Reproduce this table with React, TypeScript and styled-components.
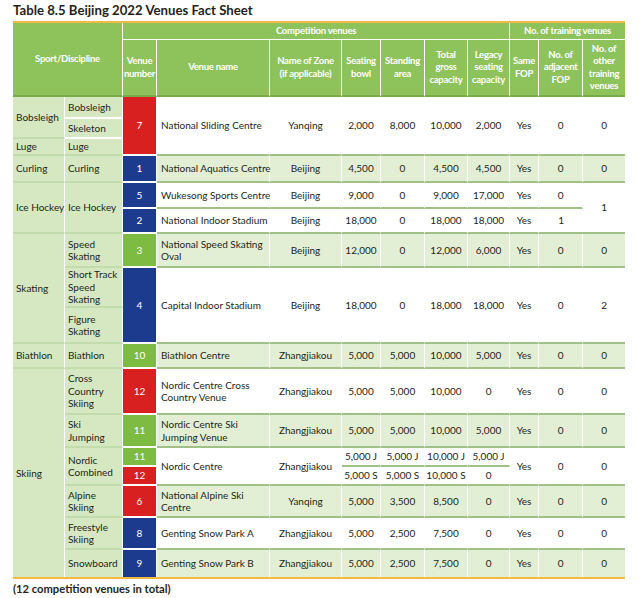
import React from "react";
import styled, { createGlobalStyle } from "styled-components";

const Global = createGlobalStyle`
  html, body { margin: 0; padding: 0; background: #ffffff; }
  body { font-family: Lato, "Open Sans", sans-serif; color: #231f20; }
`;

const Page = styled.div`
  width: 640px;
  height: 598px;
  padding: 1px 15px 0 13px;
  box-sizing: border-box;
`;

const Title = styled.h1`
  margin: 0;
  font-size: 13.2px;
  line-height: 18px;
  font-weight: 700;
  height: 20px;
`;

const Table = styled.table`
  width: 612px;
  table-layout: fixed;
  border-collapse: separate;
  border-spacing: 0;
  border-top: 2px solid #f4b942;
  border-bottom: 2px solid #f4b942;
  font-size: 10px;
  line-height: 12.5px;
`;

const Tr = styled.tr<{ $h: number }>`
  height: ${(p) => p.$h}px;
`;

const Th = styled.th<{ $last?: boolean; $bottom?: string }>`
  background: #8dc35a;
  color: #ffffff;
  font-weight: 700;
  font-size: 9.5px;
  line-height: 12.5px;
  letter-spacing: -0.25px;
  text-align: center;
  vertical-align: middle;
  padding: 0;
  border-right: ${(p) => (p.$last ? "none" : "1px solid #ffffff")};
  border-bottom: ${(p) => p.$bottom ?? "2px solid #79ab4a"};
  white-space: nowrap;
`;

const lines: Record<string, string> = {
  green: "2px solid #9fc087",
  light: "2px solid #c3dcab",
  white: "2px solid #ffffff",
  none: "none",
};

const Td = styled.td<{
  $bg?: string;
  $align?: string;
  $b?: string;
  $last?: boolean;
}>`
  background: ${(p) => p.$bg ?? "transparent"};
  color: #231f20;
  text-align: ${(p) => p.$align ?? "center"};
  vertical-align: middle;
  padding: 0 1px;
  padding-left: ${(p) => (p.$align === "left" ? "4px" : "1px")};
  border-right: ${(p) => (p.$last ? "none" : "1px solid #ffffff")};
  border-bottom: ${(p) => lines[p.$b ?? "green"]};
  white-space: nowrap;
`;

const Sport = styled(Td).attrs({ $align: "left" })`
  background: #d6e8c1;
  padding-left: 3px;
  overflow: visible;
`;

const Num = styled(Td)`
  color: #ffffff;
  border-bottom: 2px solid #ffffff;
`;

const Footer = styled.div`
  font-weight: 700;
  font-size: 11.2px;
  line-height: 14px;
  padding-top: 3px;
`;

const RED = "#d7201f";
const BLUE = "#1d3b8e";
const GRN = "#7dbb42";
const LIGHT = "#e3efd5";

type C = {
  v: string;
  rs?: number;
  b?: string;
};

const Nums: React.FC<{ cells: C[]; bg?: string }> = ({ cells, bg }) => (
  <>
    {cells.map((c, i) => (
      <Td
        key={i}
        rowSpan={c.rs}
        $bg={bg}
        $b={c.b}
        $last={i === cells.length - 1}
      >
        {c.v}
      </Td>
    ))}
  </>
);

const plain = (vals: string[], rs?: number): C[] => vals.map((v) => ({ v, rs }));

export default function App() {
  return (
    <Page>
      <Global />
      <Title>Table 8.5 Beijing 2022 Venues Fact Sheet</Title>
      <Table>
        <colgroup>
          <col style={{ width: 52 }} />
          <col style={{ width: 58 }} />
          <col style={{ width: 34 }} />
          <col style={{ width: 113 }} />
          <col style={{ width: 72 }} />
          <col style={{ width: 39 }} />
          <col style={{ width: 44 }} />
          <col style={{ width: 43 }} />
          <col style={{ width: 42 }} />
          <col style={{ width: 29 }} />
          <col style={{ width: 44 }} />
          <col style={{ width: 42 }} />
        </colgroup>
        <thead>
          <Tr $h={17}>
            <Th colSpan={2} rowSpan={2}>Sport/Discipline</Th>
            <Th colSpan={7} $bottom="1px solid #ffffff">Competition venues</Th>
            <Th colSpan={3} $last $bottom="1px solid #ffffff">No. of training venues</Th>
          </Tr>
          <Tr $h={57}>
            <Th>Venue<br />number</Th>
            <Th>Venue name</Th>
            <Th>Name of Zone<br />(if applicable)</Th>
            <Th>Seating<br />bowl</Th>
            <Th>Standing<br />area</Th>
            <Th>Total<br />gross<br />capacity</Th>
            <Th>Legacy<br />seating<br />capacity</Th>
            <Th>Same<br />FOP</Th>
            <Th>No. of<br />adjacent<br />FOP</Th>
            <Th $last>No. of<br />other<br />training<br />venues</Th>
          </Tr>
        </thead>
        <tbody>
          <Tr $h={22}>
            <Sport rowSpan={2} $b="light">Bobsleigh</Sport>
            <Sport $b="white">Bobsleigh</Sport>
            <Num rowSpan={3} $bg={RED}>7</Num>
            <Td rowSpan={3} $align="left">National Sliding Centre</Td>
            <Nums cells={plain(["Yanqing", "2,000", "8,000", "10,000", "2,000", "Yes", "0", "0"], 3)} />
          </Tr>
          <Tr $h={20}>
            <Sport $b="white">Skeleton</Sport>
          </Tr>
          <Tr $h={17}>
            <Sport $b="light">Luge</Sport>
            <Sport $b="light">Luge</Sport>
          </Tr>
          <Tr $h={27}>
            <Sport $b="light">Curling</Sport>
            <Sport $b="light">Curling</Sport>
            <Num $bg={BLUE}>1</Num>
            <Td $align="left" $bg={LIGHT}>National Aquatics Centre</Td>
            <Nums bg={LIGHT} cells={plain(["Beijing", "4,500", "0", "4,500", "4,500", "Yes", "0", "0"])} />
          </Tr>
          <Tr $h={26}>
            <Sport rowSpan={2} $b="light">Ice Hockey</Sport>
            <Sport rowSpan={2} $b="light">Ice Hockey</Sport>
            <Num $bg={BLUE}>5</Num>
            <Td $align="left">Wukesong Sports Centre</Td>
            <Nums
              cells={[
                ...plain(["Beijing", "9,000", "0", "9,000", "17,000", "Yes", "0"]),
                { v: "1", rs: 2 },
              ]}
            />
          </Tr>
          <Tr $h={25}>
            <Num $bg={BLUE}>2</Num>
            <Td $align="left">National Indoor Stadium</Td>
            <Nums cells={plain(["Beijing", "18,000", "0", "18,000", "18,000", "Yes", "1"])} />
          </Tr>
          <Tr $h={34}>
            <Sport rowSpan={3} $b="light">Skating</Sport>
            <Sport $b="light">Speed<br />Skating</Sport>
            <Num $bg={GRN}>3</Num>
            <Td $align="left" $bg={LIGHT}>
              National Speed Skating<br />Oval
            </Td>
            <Nums bg={LIGHT} cells={plain(["Beijing", "12,000", "0", "12,000", "6,000", "Yes", "0", "0"])} />
          </Tr>
          <Tr $h={40}>
            <Sport $b="light">Short Track<br />Speed<br />Skating</Sport>
            <Num rowSpan={2} $bg={BLUE}>4</Num>
            <Td rowSpan={2} $align="left">Capital Indoor Stadium</Td>
            <Nums cells={plain(["Beijing", "18,000", "0", "18,000", "18,000", "Yes", "0", "2"], 2)} />
          </Tr>
          <Tr $h={36}>
            <Sport $b="light">Figure<br />Skating</Sport>
          </Tr>
          <Tr $h={25}>
            <Sport $b="light">Biathlon</Sport>
            <Sport $b="light">Biathlon</Sport>
            <Num $bg={GRN}>10</Num>
            <Td $align="left" $bg={LIGHT}>Biathlon Centre</Td>
            <Nums bg={LIGHT} cells={plain(["Zhangjiakou", "5,000", "5,000", "10,000", "5,000", "Yes", "0", "0"])} />
          </Tr>
          <Tr $h={46}>
            <Sport rowSpan={8} $b="none">Skiing</Sport>
            <Sport $b="light">Cross<br />Country<br />Skiing</Sport>
            <Num $bg={RED}>12</Num>
            <Td $align="left">
              Nordic Centre Cross<br />Country Venue
            </Td>
            <Nums cells={plain(["Zhangjiakou", "5,000", "5,000", "10,000", "0", "Yes", "0", "0"])} />
          </Tr>
          <Tr $h={33}>
            <Sport $b="light">Ski<br />Jumping</Sport>
            <Num $bg={GRN}>11</Num>
            <Td $align="left" $bg={LIGHT}>
              Nordic Centre Ski<br />Jumping Venue
            </Td>
            <Nums bg={LIGHT} cells={plain(["Zhangjiakou", "5,000", "5,000", "10,000", "5,000", "Yes", "0", "0"])} />
          </Tr>
          <Tr $h={19}>
            <Sport rowSpan={2} $b="light">Nordic<br />Combined</Sport>
            <Num $bg={GRN}>11</Num>
            <Td rowSpan={2} $align="left">Nordic Centre</Td>
            <Td rowSpan={2}>Zhangjiakou</Td>
            <Td>5,000 J</Td>
            <Td>5,000 J</Td>
            <Td>10,000 J</Td>
            <Td>5,000 J</Td>
            <Td rowSpan={2}>Yes</Td>
            <Td rowSpan={2}>0</Td>
            <Td rowSpan={2} $last>0</Td>
          </Tr>
          <Tr $h={19}>
            <Num $bg={RED}>12</Num>
            <Td>5,000 S</Td>
            <Td>5,000 S</Td>
            <Td>10,000 S</Td>
            <Td>0</Td>
          </Tr>
          <Tr $h={32}>
            <Sport $b="light">Alpine<br />Skiing</Sport>
            <Num $bg={RED}>6</Num>
            <Td $align="left" $bg={LIGHT}>
              National Alpine Ski<br />Centre
            </Td>
            <Nums bg={LIGHT} cells={plain(["Yanqing", "5,000", "3,500", "8,500", "0", "Yes", "0", "0"])} />
          </Tr>
          <Tr $h={32}>
            <Sport $b="light">Freestyle<br />Skiing</Sport>
            <Num $bg={BLUE}>8</Num>
            <Td $align="left">Genting Snow Park A</Td>
            <Nums cells={plain(["Zhangjiakou", "5,000", "2,500", "7,500", "0", "Yes", "0", "0"])} />
          </Tr>
          <Tr $h={27}>
            <Sport $b="none">Snowboard</Sport>
            <Num $bg={BLUE} style={{ borderBottom: "none" }}>9</Num>
            <Td $align="left" $bg={LIGHT} $b="none">Genting Snow Park B</Td>
            <Nums
              bg={LIGHT}
              cells={plain(["Zhangjiakou", "5,000", "2,500", "7,500", "0", "Yes", "0", "0"]).map((c) => ({ ...c, b: "none" }))}
            />
          </Tr>
        </tbody>
      </Table>
      <Footer>(12 competition venues in total)</Footer>
    </Page>
  );
}
